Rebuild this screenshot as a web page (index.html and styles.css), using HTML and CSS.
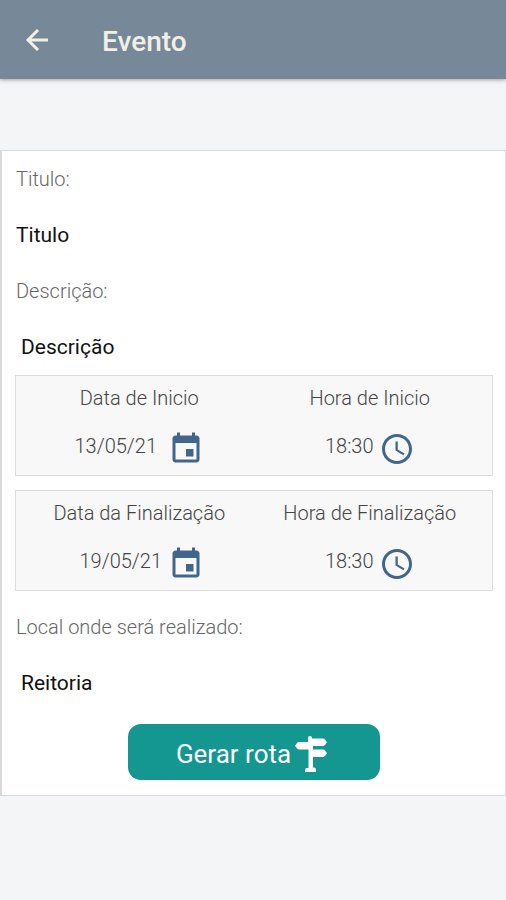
FILE: index.html
```html
<!DOCTYPE html>
<html lang="pt-BR">
<head>
<meta charset="utf-8">
<meta name="viewport" content="width=device-width, initial-scale=1">
<title>Evento</title>
<link rel="stylesheet" href="styles.css">
</head>
<body>
<svg class="symbols" aria-hidden="true">
  <symbol id="calendar" viewBox="0 0 24 24"><path d="M17 12h-5v5h5v-5zM16 1v2H8V1H6v2H5c-1.110 0-1.990.9-1.990 2L3 19c0 1.100.89 2 2 2h14c1.100 0 2-.9 2-2V5c0-1.100-.9-2-2-2h-1V1h-2zm3 18H5V8h14v11z"/></symbol>
  <symbol id="clock" viewBox="0 0 24 24"><path d="M12 2C6.480 2 2 6.480 2 12s4.480 10 10 10 10-4.480 10-10S17.520 2 12 2zm0 18c-4.420 0-8-3.580-8-8s3.580-8 8-8 8 3.580 8 8-3.580 8-8 8zM12.500 7H11v6l5.250 3.150.75-1.230-4.500-2.670z"/></symbol>
</svg>
<header class="appbar">
  <button class="back" type="button" aria-label="Voltar">
    <svg viewBox="0 0 24 24"><path d="M22 12H3M12 2L2 12l10 10"/></svg>
  </button>
  <h1 class="title">Evento</h1>
</header>
<main class="card">
  <p class="label">Titulo:</p>
  <p class="value">Titulo</p>
  <p class="label">Descrição:</p>
  <p class="value indented">Descrição</p>
  <section class="period">
    <div class="cell">
      <span>Data de Inicio</span>
      <div class="entry"><span class="date">13/05/21</span><svg class="icon"><use href="#calendar"/></svg></div>
    </div>
    <div class="cell">
      <span>Hora de Inicio</span>
      <div class="entry"><span class="time">18:30</span><svg class="icon"><use href="#clock"/></svg></div>
    </div>
  </section>
  <section class="period">
    <div class="cell">
      <span>Data da Finalização</span>
      <div class="entry"><span class="date end">19/05/21</span><svg class="icon"><use href="#calendar"/></svg></div>
    </div>
    <div class="cell">
      <span>Hora de Finalização</span>
      <div class="entry"><span class="time">18:30</span><svg class="icon"><use href="#clock"/></svg></div>
    </div>
  </section>
  <p class="label">Local onde será realizado:</p>
  <p class="value indented">Reitoria</p>
  <button class="route" type="button">Gerar rota
    <svg viewBox="0 0 34 38"><path d="M14 3q0-2 2-2t2 2v.5h11q1 0 2 1l2 2.700-2 2.800q-1 1-2 1H19v3.500h10q1 0 2 1l2 2.700-2 2.800q-1 1-2 1H19v10.500h1q2 0 2 2V37H11v-2q0-2 2-2h1.500V14.500H5q-1 0-2-1l-2-2.700L3 8q1-1 2-1h9z"/></svg>
  </button>
</main>
</body>
</html>
```
FILE: styles.css
```css
* {
  box-sizing: border-box;
}

body {
  margin: 0;
  min-height: 100vh;
  background: #f3f5f7;
  font-family: Roboto, "Liberation Sans", sans-serif;
  font-size: 20px;
  line-height: 24px;
}

.symbols {
  position: absolute;
  width: 0;
  height: 0;
}

.appbar {
  display: flex;
  align-items: center;
  gap: 51px;
  height: 79px;
  padding: 0 25px;
  background: #778899;
  box-shadow: 0 1px 4px rgba(0, 0, 0, 0.35);
  color: #f0f0e6;
}

.back {
  display: flex;
  padding: 0;
  border: 0;
  background: none;
  color: inherit;
}

.back svg {
  width: 26px;
  height: 24px;
  fill: none;
  stroke: currentColor;
  stroke-width: 3;
}

.title {
  margin: 4px 0 0;
  font-size: 28px;
  font-weight: 500;
  line-height: 32px;
}

.card {
  display: flex;
  flex-direction: column;
  margin-top: 71px;
  padding: 0 12px 15px 13px;
  border: 1px solid #dadadc;
  border-left-width: 2px;
  background: #fff;
}

.label,
.value {
  margin: 0;
  padding: 16px 1px;
}

.label {
  color: #666;
  font-weight: 300;
}

.value {
  color: #111;
  font-size: 21px;
}

.indented {
  padding-left: 6px;
}

.period {
  display: grid;
  grid-template-columns: 1fr 1fr;
  margin-bottom: 14px;
  padding: 10px 7px 8px 8px;
  border: 1px solid #dcdcdc;
  background: #f8f8f8;
  color: #444;
  font-weight: 300;
}

.period + .label {
  margin-top: -6px;
}

.cell {
  display: flex;
  flex-direction: column;
  align-items: center;
  gap: 21px;
}

.entry {
  display: flex;
}

.entry span {
  margin-top: 3px;
}

.date {
  padding-right: 11px;
}

.end {
  padding: 0 6px 0 5px;
}

.time {
  padding-right: 5px;
}

.icon {
  width: 36px;
  height: 36px;
  fill: #41658c;
}

.route {
  display: flex;
  align-items: center;
  justify-content: center;
  gap: 3px;
  align-self: center;
  width: 252px;
  height: 56px;
  margin-top: 13px;
  padding: 3px 10px 0 6px;
  border: 0;
  border-radius: 13px;
  background: #139790;
  color: #fff;
  font: inherit;
  font-size: 26px;
}

.route svg {
  width: 34px;
  height: 38px;
  fill: currentColor;
}
```
